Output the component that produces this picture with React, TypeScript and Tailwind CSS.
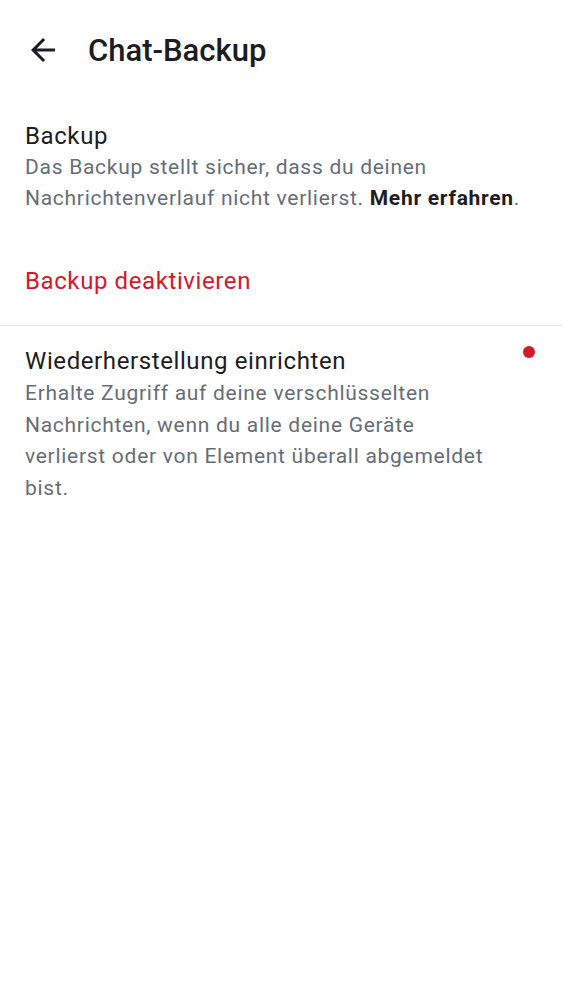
function BackArrow() {
  return (
    <svg viewBox="0 0 24 24" className="h-[36px] w-[36px] fill-[#1b1d22]">
      <path d="M20 11H7.83l5.59-5.59L12 4l-8 8 8 8 1.41-1.41L7.83 13H20v-2z" />
    </svg>
  );
}

export default function App() {
  return (
    <div className="min-h-screen bg-white font-['Roboto',sans-serif] text-[#1b1d22]">
      <header className="flex h-[100px] items-center pl-[25px]">
        <BackArrow />
        <h1 className="ml-[27px] text-[31px] font-medium leading-none">Chat-Backup</h1>
      </header>

      <section className="px-[25px] pt-[20px]">
        <div className="text-[24px] leading-[32px] tracking-[0.6px]">Backup</div>
        <p className="text-[21px] leading-[31px] tracking-[0.72px] text-[#656d77]">
          Das Backup stellt sicher, dass du deinen Nachrichtenverlauf nicht verlierst.{" "}
          <span className="font-bold text-[#1b1d22]">Mehr erfahren</span>.
        </p>
      </section>

      <button className="block px-[25px] pt-[51px] pb-[28px] text-left text-[24px] leading-[32px] tracking-[0.6px] text-[#d51928]">
        Backup deaktivieren
      </button>

      <div className="h-px bg-[#e1e6ec]" />

      <section className="flex items-start justify-between pl-[25px] pr-[27px] pt-[18px]">
        <div className="w-[468px]">
          <div className="text-[24px] leading-[34px] tracking-[0.6px]">Wiederherstellung einrichten</div>
          <p className="text-[21px] leading-[31.5px] tracking-[0.72px] text-[#656d77]">
            Erhalte Zugriff auf deine verschlüsselten Nachrichten, wenn du alle deine Geräte verlierst oder von Element überall abgemeldet bist.
          </p>
        </div>
        <span className="mt-[2px] h-[12px] w-[12px] rounded-full bg-[#d51928]" />
      </section>
    </div>
  );
}
